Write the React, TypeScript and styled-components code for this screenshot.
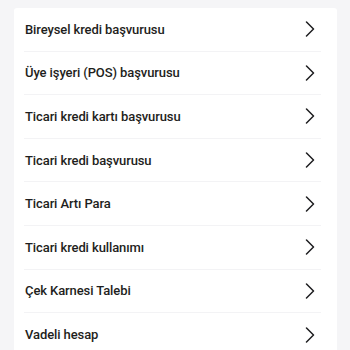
import styled, { createGlobalStyle } from "styled-components"

const GlobalStyle = createGlobalStyle`
  html, body {
    margin: 0;
    padding: 0;
    background: #f5f5f7;
  }
`

const Page = styled.div`
  width: 350px;
  height: 350px;
  overflow: hidden;
  padding: 8px 13px 0 14px;
  box-sizing: border-box;
  font-family: Roboto, "Noto Sans", sans-serif;
`

const Card = styled.ul`
  list-style: none;
  margin: 0;
  padding: 0 16px 0 10px;
  background: #ffffff;
  border-radius: 3px;
`

const Row = styled.li<{ $last?: boolean }>`
  display: flex;
  align-items: center;
  justify-content: space-between;
  height: 43.6px;
  padding: 0 6px 0 1px;
  box-sizing: border-box;
  border-bottom: ${({ $last }) => ($last ? "none" : "1px solid #f3f3f5")};
`

const Label = styled.span`
  font-size: 13px;
  font-weight: 500;
  color: #1e1e20;
  letter-spacing: -0.1px;
`

const Chevron = () => (
  <svg width="10" height="16" viewBox="0 0 10 16" fill="none">
    <path d="M1.5 1 L8.5 8 L1.5 15" stroke="#1e1e20" strokeWidth="1.5" strokeLinecap="round" strokeLinejoin="round" />
  </svg>
)

const items = [
  "Bireysel kredi başvurusu",
  "Üye işyeri (POS) başvurusu",
  "Ticari kredi kartı başvurusu",
  "Ticari kredi başvurusu",
  "Ticari Artı Para",
  "Ticari kredi kullanımı",
  "Çek Karnesi Talebi",
  "Vadeli hesap",
]

export default function App() {
  return (
    <>
      <GlobalStyle />
      <Page>
        <Card>
          {items.map((item, i) => (
            <Row key={item} $last={i === items.length - 1}>
              <Label>{item}</Label>
              <Chevron />
            </Row>
          ))}
        </Card>
      </Page>
    </>
  )
}
